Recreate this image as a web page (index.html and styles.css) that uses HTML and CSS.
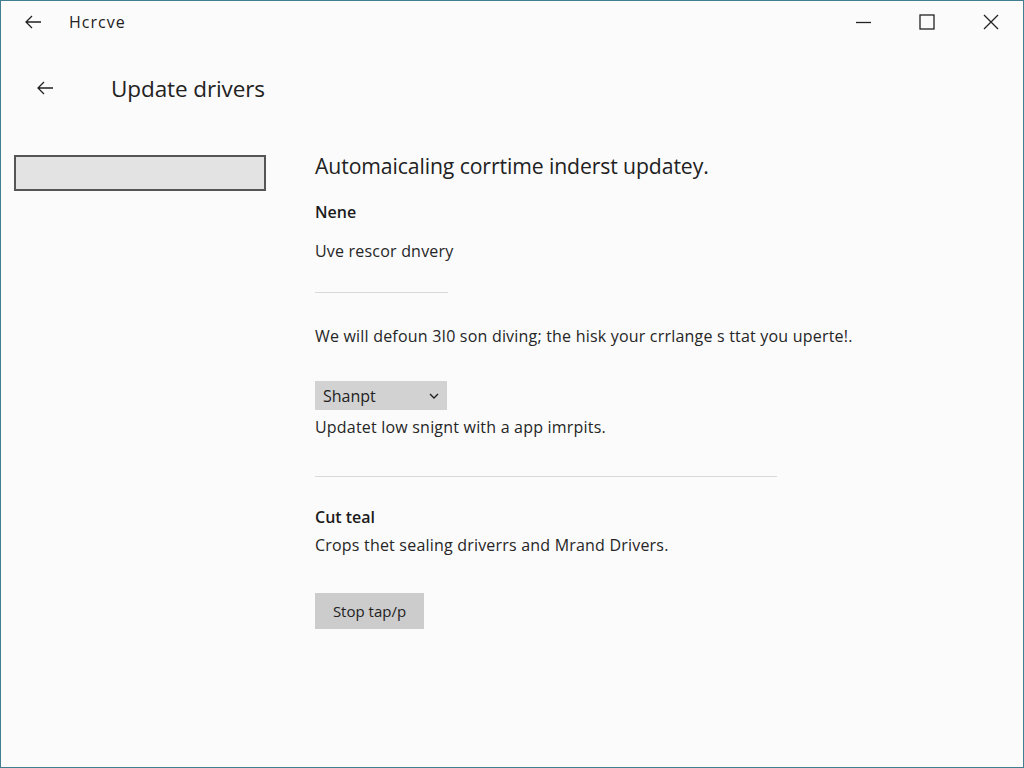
FILE: index.html
```html
<!DOCTYPE html>
<html lang="en">
<head>
<meta charset="utf-8">
<title>Hcrcve</title>
<link rel="stylesheet" href="styles.css">
</head>
<body>
<div class="window">
  <header class="titlebar">
    <div class="tb-left">
      <svg class="tb-back" width="18" height="14" viewBox="0 0 18 14"><path d="M17 7H2M8 1L2 7l6 6" fill="none" stroke="#222" stroke-width="1.3"/></svg>
      <span class="tb-title">Hcrcve</span>
    </div>
    <div class="tb-controls">
      <span class="ctl"><svg width="16" height="16" viewBox="0 0 16 16"><path d="M1 8.5h15" stroke="#222" stroke-width="1.3"/></svg></span>
      <span class="ctl"><svg width="16" height="16" viewBox="0 0 16 16"><rect x="1" y="1" width="14" height="14" fill="none" stroke="#222" stroke-width="1.3"/></svg></span>
      <span class="ctl"><svg width="16" height="16" viewBox="0 0 16 16"><path d="M1 1l14 14M15 1L1 15" stroke="#222" stroke-width="1.3"/></svg></span>
    </div>
  </header>
  <div class="pagehead">
    <svg class="ph-back" width="18" height="14" viewBox="0 0 18 14"><path d="M17 7H2M8 1L2 7l6 6" fill="none" stroke="#222" stroke-width="1.3"/></svg>
    <h1 class="ph-title">Update drivers</h1>
  </div>
  <div class="main">
    <aside class="sidebar">
      <div class="searchbox"></div>
    </aside>
    <section class="content">
      <h2 class="heading">Automaicaling corrtime inderst updatey.</h2>
      <p class="label l-nene">Nene</p>
      <p class="text t-uve">Uve rescor dnvery</p>
      <hr class="rule rule-short">
      <p class="text t-we">We will defoun 3I0 son diving; the hisk your crrlange s ttat you uperte!.</p>
      <div class="dropdown"><span>Shanpt</span><svg width="10" height="6" viewBox="0 0 10 6"><path d="M1 1l4 4 4-4" fill="none" stroke="#222" stroke-width="1.4"/></svg></div>
      <p class="text t-upd">Updatet low snignt with a app imrpits.</p>
      <hr class="rule rule-long">
      <p class="label l-cut">Cut teal</p>
      <p class="text t-crops">Crops thet sealing driverrs and Mrand Drivers.</p>
      <button class="btn">Stop tap/p</button>
    </section>
  </div>
</div>
</body>
</html>
```
FILE: styles.css
```css
* { box-sizing: border-box; }
html, body { margin: 0; padding: 0; }
body {
  width: 1024px;
  height: 768px;
  overflow: hidden;
  font-family: "Open Sans", "Noto Sans", sans-serif;
  color: #1b1b1b;
  background: #fbfbfb;
}
.window {
  width: 1024px;
  height: 768px;
  border: 1px solid #3f7f90;
  background: #fbfbfb;
  display: flex;
  flex-direction: column;
}
.titlebar {
  height: 42px;
  display: flex;
  align-items: center;
  justify-content: space-between;
}
.tb-left { display: flex; align-items: center; }
.tb-back { margin-left: 23px; }
.tb-title {
  margin-left: 27px;
  font-size: 16px;
  letter-spacing: 1px;
  color: #222;
}
.tb-controls { display: flex; margin-right: 0; }
.ctl {
  width: 64px;
  height: 42px;
  display: flex;
  align-items: center;
  justify-content: center;
}
.pagehead {
  margin-top: 23px;
  height: 44px;
  display: flex;
  align-items: center;
}
.ph-back { margin-left: 35px; }
.ph-title {
  margin: 0 0 0 57px;
  font-size: 22.5px;
  font-weight: 400;
  color: #222;
  letter-spacing: -0.1px;
}
.main { display: flex; flex: 1; }
.sidebar { width: 314px; padding: 45px 0 0 13px; }
.searchbox {
  width: 252px;
  height: 36px;
  border: 2px solid #555;
  background: #e3e3e3;
}
.content { padding-top: 41px; }
.heading {
  margin: 0;
  font-size: 21.2px;
  line-height: 30px;
  font-weight: 400;
  color: #222;
  letter-spacing: -0.1px;
}
.label {
  margin: 0;
  font-size: 16px;
  line-height: 20px;
  font-weight: 600;
  color: #1b1b1b;
}
.text {
  margin: 0;
  font-size: 16px;
  line-height: 20px;
  color: #262626;
  letter-spacing: 0.2px;
}
.l-nene { margin-top: 21px; }
.t-uve { margin-top: 19px; }
.rule { border: 0; height: 1px; background: #d9d9d9; margin: 0; }
.rule-short { width: 133px; margin-top: 31px; }
.t-we { margin-top: 33px; }
.dropdown {
  margin-top: 35px;
  width: 132px;
  height: 29px;
  background: #d2d2d2;
  display: flex;
  align-items: center;
  justify-content: space-between;
  padding: 0 8px 0 8px;
  font-size: 16px;
  color: #222;
}
.t-upd { margin-top: 7px; }
.rule-long { width: 462px; margin-top: 39px; }
.l-cut { margin-top: 30px; }
.t-crops { margin-top: 8px; }
.btn {
  margin-top: 38px;
  width: 109px;
  height: 36px;
  border: 0;
  background: #cccccc;
  font-family: inherit;
  font-size: 15px;
  color: #222;
  letter-spacing: 0;
  padding: 0;
}
```
